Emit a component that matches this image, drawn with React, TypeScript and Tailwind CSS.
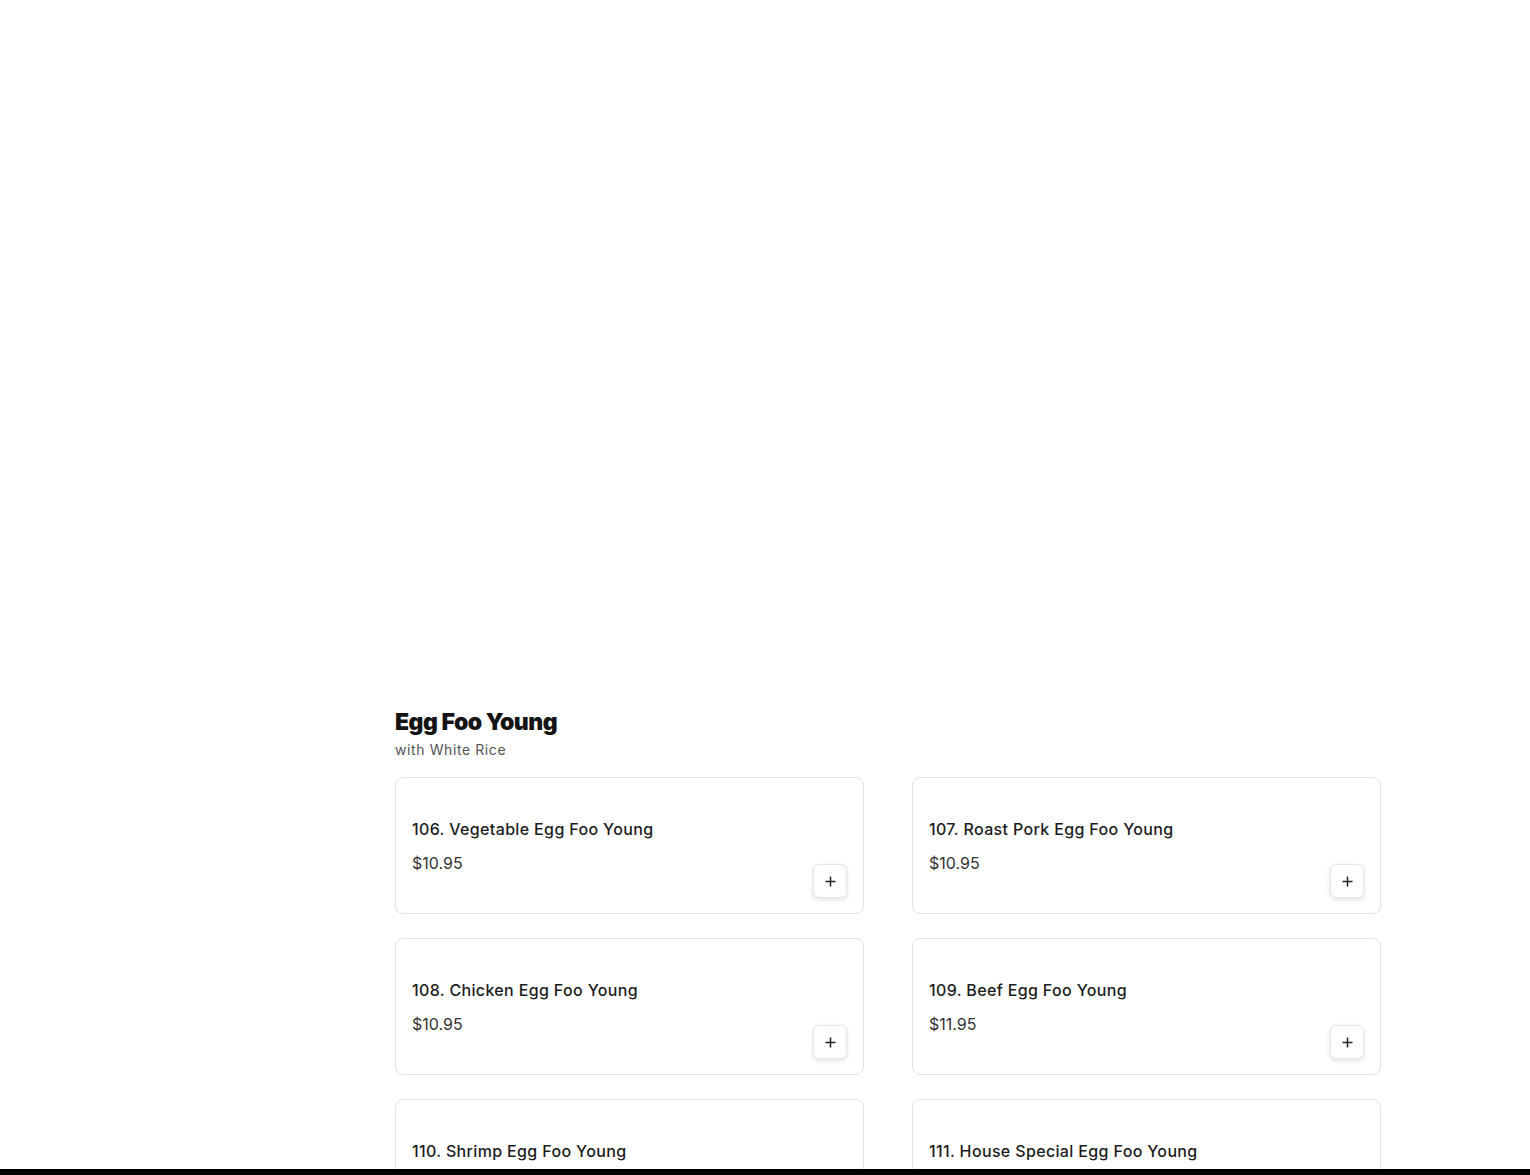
import React from "react";

const items = [
  { name: "106. Vegetable Egg Foo Young", price: "$10.95" },
  { name: "107. Roast Pork Egg Foo Young", price: "$10.95" },
  { name: "108. Chicken Egg Foo Young", price: "$10.95" },
  { name: "109. Beef Egg Foo Young", price: "$11.95" },
  { name: "110. Shrimp Egg Foo Young", price: "$11.95" },
  { name: "111. House Special Egg Foo Young", price: "$12.95" },
];

function Card({ name, price }: { name: string; price: string }) {
  return (
    <div className="h-[137px] rounded-[8px] border border-[#e3e3e3] bg-white px-4 pt-[39px] pb-[15px] flex items-end justify-between">
      <div className="mb-[23px]">
        <div className="text-[16px] leading-6 text-[#1c1c1c] font-medium tracking-[0.35px]">{name}</div>
        <div className="mt-[10px] text-[16px] leading-6 text-[#333] tracking-[0px]">{price}</div>
      </div>
      <button className="w-[34px] h-[34px] rounded-[6px] border border-[#e6e6e6] bg-white shadow-[0_2px_5px_rgba(0,0,0,0.12)] flex items-center justify-center">
        <svg width="11" height="11" viewBox="0 0 11 11">
          <path d="M5.5 0.5v10M0.5 5.5h10" stroke="#222" strokeWidth="1.5" />
        </svg>
      </button>
    </div>
  );
}

export default function App() {
  return (
    <div className="min-h-screen bg-white" style={{ fontFamily: "Inter, 'Noto Sans', sans-serif" }}>
      <div className="pt-[707px] pl-[395px] w-[1381px] pb-10">
        <h2 className="text-[23px] leading-[30px] font-black text-[#141414] tracking-[-0.5px]">Egg Foo Young</h2>
        <p className="mt-[3px] text-[14px] leading-5 text-[#555] tracking-[0.6px]">with White Rice</p>
        <div className="mt-[17px] grid grid-cols-2 gap-x-[48px] gap-y-[24px]">
          {items.map((it) => (
            <Card key={it.name} {...it} />
          ))}
        </div>
      </div>
      <div className="fixed bottom-0 left-0 right-0 h-[6px] bg-black" />
    </div>
  );
}
